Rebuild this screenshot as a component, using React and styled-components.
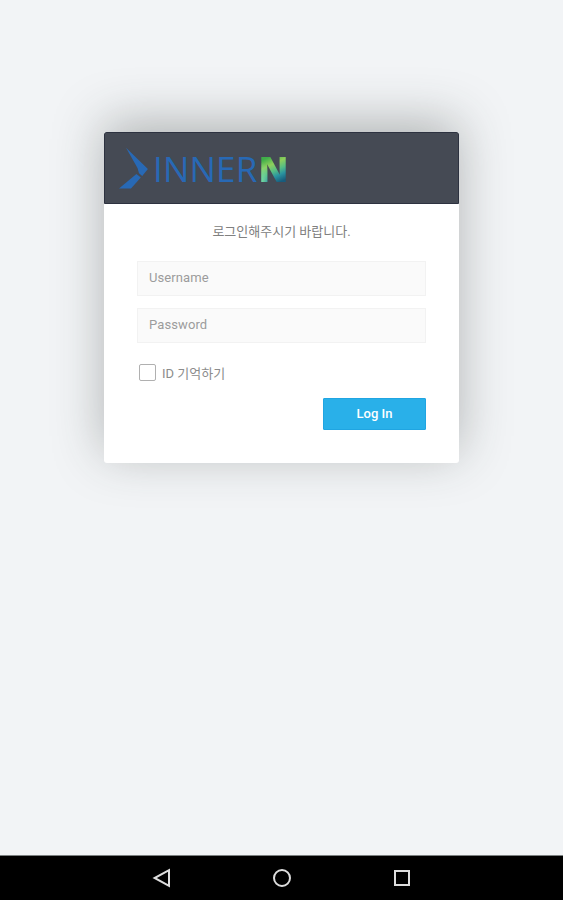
import React, { useState } from "react";
import styled, { createGlobalStyle } from "styled-components";

const App = () => {
  const [username, setUsername] = useState("");
  const [password, setPassword] = useState("");

  return (
    <>
      <GlobalStyle />
      <Screen>
        <Content>
          <Card>
            <Header>
              <LogoMark viewBox="0 0 30 42">
                <path d="M7 0.8 L28.9 22 L23.2 29 L20 26.3 L18.5 21 Z" />
                <path d="M0 41.6 L17.4 27 L21.8 30.6 L12 41.6 Z" />
              </LogoMark>
              <LogoText>INNER</LogoText>
              <LogoAccent>N</LogoAccent>
            </Header>
            <Form onSubmit={(e) => e.preventDefault()}>
              <Message>로그인해주시기 바랍니다.</Message>
              <Field
                placeholder="Username"
                value={username}
                onChange={(e) => setUsername(e.target.value)}
              />
              <Field
                type="password"
                placeholder="Password"
                value={password}
                onChange={(e) => setPassword(e.target.value)}
              />
              <Remember>
                <Checkbox type="checkbox" />
                ID 기억하기
              </Remember>
              <LoginButton type="submit">Log In</LoginButton>
            </Form>
          </Card>
        </Content>
        <NavBar>
          <NavIcon viewBox="0 0 20 20">
            <path d="M17 2.2 L17 17.8 L2.6 10 Z" />
          </NavIcon>
          <NavIcon viewBox="0 0 20 20">
            <circle cx="10" cy="10" r="8" />
          </NavIcon>
          <NavIcon viewBox="0 0 20 20">
            <rect x="3" y="3" width="14" height="14" />
          </NavIcon>
        </NavBar>
      </Screen>
    </>
  );
};

const GlobalStyle = createGlobalStyle`
  * {
    box-sizing: border-box;
  }

  body {
    margin: 0;
    background: #f2f4f6;
    font-family: Roboto, "Noto Sans CJK KR", sans-serif;
  }
`;

const Screen = styled.div`
  display: flex;
  flex-direction: column;
  height: 100vh;
  overflow: hidden;
`;

const Content = styled.main`
  flex: 1;
  padding: 132px 104px 0;
`;

const Card = styled.section`
  width: 355px;
  height: 331px;
  overflow: hidden;
  border-radius: 3px;
  background: #fff;
  box-shadow: 0 -10px 50px rgba(50, 56, 54, 0.34);
`;

const Header = styled.header`
  display: flex;
  align-items: center;
  height: 72px;
  padding-left: 14px;
  border: 1px solid #2d3240;
  border-radius: 2px 2px 0 0;
  background: #454a54;
`;

const LogoMark = styled.svg`
  width: 30px;
  height: 42px;
  margin-right: 4px;
  fill: #2869b5;
`;

const LogoText = styled.span`
  padding-top: 1px;
  color: #2869b5;
  font: 400 35px/48px "Open Sans", sans-serif;
  letter-spacing: 0.2px;
`;

const LogoAccent = styled.span`
  padding-top: 1px;
  margin-left: 1px;
  color: transparent;
  font: 800 36px/48px "Open Sans", sans-serif;
  background: radial-gradient(
      ellipse 8px 20px at 3px 38px,
      rgba(125, 222, 160, 0.9),
      transparent
    ),
    linear-gradient(
      155deg,
      #3fae49 28%,
      #8fcf5c 42%,
      #55bd85 54%,
      #2a93a0 64%,
      #175c7d 76%
    );
  -webkit-background-clip: text;
  background-clip: text;
`;

const Form = styled.form`
  display: flex;
  flex-direction: column;
  padding: 18px 33px 0;
`;

const Message = styled.p`
  margin: 0 0 19px;
  color: #808080;
  font-size: 13px;
  line-height: 20px;
  text-align: center;
`;

const Field = styled.input`
  height: 35px;
  margin-bottom: 12px;
  padding: 0 11px 2px;
  border: 1px solid #f2f2f2;
  border-radius: 0;
  outline: none;
  background: #fafafa;
  color: #777;
  font: 13px Roboto, "Noto Sans CJK KR", sans-serif;
  letter-spacing: 0.1px;

  &::placeholder {
    color: #9c9c9c;
    opacity: 1;
  }
`;

const Remember = styled.label`
  display: flex;
  align-items: center;
  height: 20px;
  margin: 7px 0 16px 2px;
  color: #8c8c8c;
  font-size: 13px;
`;

const Checkbox = styled.input`
  width: 17px;
  height: 17px;
  margin: 0 6px 0 0;
  appearance: none;
  border: 1.5px solid #b0b0b0;
  border-radius: 2px;
  background: #fff;

  &:checked {
    background: #27aee8;
  }
`;

const LoginButton = styled.button`
  align-self: flex-end;
  width: 103px;
  height: 32px;
  padding: 0 0 2px;
  border: 1px solid #20a5e2;
  border-radius: 1px;
  background: #29b0e9;
  color: #fff;
  font: 500 13px Roboto, sans-serif;
`;

const NavBar = styled.nav`
  display: flex;
  justify-content: center;
  align-items: center;
  gap: 100px;
  height: 45px;
  border-top: 1px solid #7b8080;
  background: #000;
`;

const NavIcon = styled.svg`
  width: 20px;
  height: 20px;
  fill: none;
  stroke: #ddd;
  stroke-width: 2;
`;

export default App;
